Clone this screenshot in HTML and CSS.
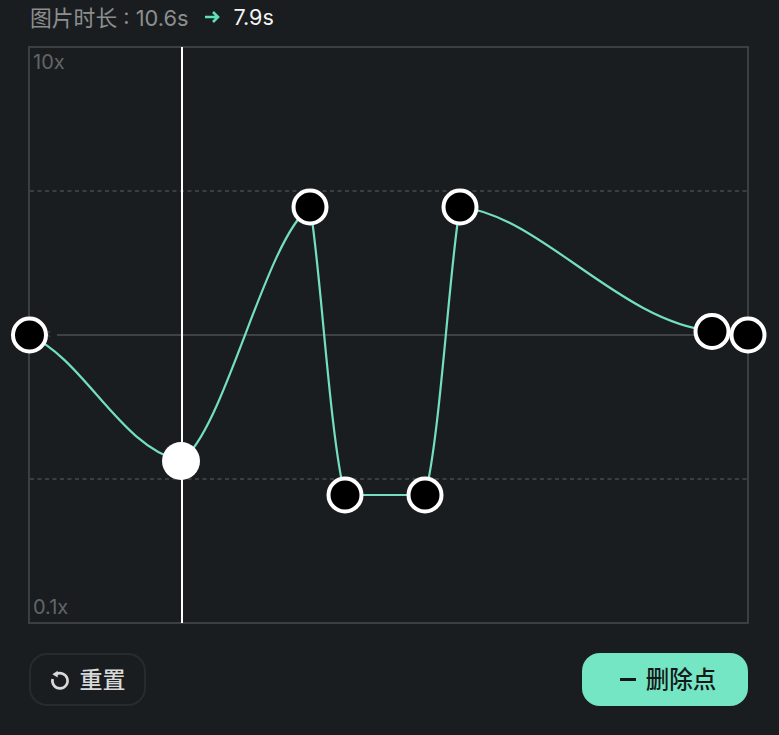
FILE: index.html
```html
<!DOCTYPE html>
<html lang="zh-CN">
<head>
    <meta charset="UTF-8">
    <meta name="viewport" content="width=device-width, initial-scale=1.0">
    <title>图片时长</title>
    <link rel="stylesheet" href="styles.css">
</head>
<body>
    <div class="panel">
        <div class="duration">
            <span class="duration-old">图片时长 : 10.6s</span>
            <svg class="arrow" width="16" height="14" viewBox="0 0 16 14">
                <path d="M1 7H14M9 2l5 5-5 5" fill="none" stroke="#5fe0b8" stroke-width="2.6"/>
            </svg>
            <span class="duration-new">7.9s</span>
        </div>

        <div class="chart">
            <span class="axis-label axis-top">10x</span>
            <span class="axis-label axis-bottom">0.1x</span>
            <svg class="curve" width="720" height="577" viewBox="29 47 720 577">
                <rect x="29" y="47" width="719" height="576" fill="none" stroke="#3b3f42" stroke-width="2"/>
                <path d="M30 191H748M30 479H748" stroke="#46494c" stroke-width="1.5" stroke-dasharray="4 3.500"/>
                <path d="M57 335H748" stroke="#3f4245" stroke-width="2"/>
                <path d="M50 331l-3 3 3 3" fill="none" stroke="#3f4245" stroke-width="1.500"/>
                <path d="M182 47V623" stroke="#fff" stroke-width="2"/>

                <g fill="none" stroke="#74dfbd" stroke-width="2.200">
                    <path d="M29 335C85 360 120 447 181 461"/>
                    <path d="M181 461C225 430 265 240 310 207"/>
                    <path d="M310 207C320 260 330 440 345 495"/>
                    <path d="M345 495H425"/>
                    <path d="M425 495C440 440 450 260 460 207"/>
                    <path d="M460 207C540 215 620 322 712 331"/>
                </g>

                <g fill="#000" stroke="#fff" stroke-width="4">
                    <circle cx="29.500" cy="335" r="16.500"/>
                    <circle cx="310" cy="207" r="16.500"/>
                    <circle cx="345" cy="495" r="16.500"/>
                    <circle cx="425" cy="495" r="16.500"/>
                    <circle cx="460" cy="207" r="16.500"/>
                    <circle cx="712" cy="331.500" r="16.500"/>
                    <circle cx="748" cy="335" r="16.500"/>
                </g>
                <circle cx="181" cy="461" r="19" fill="#fff"/>
            </svg>
        </div>

        <div class="actions">
            <button class="btn btn-reset">
                <svg width="20" height="20" viewBox="0 0 20 20">
                    <path d="M6 4.300A7.600 7.600 0 1 1 2.600 9" fill="none" stroke="#d9d9d9" stroke-width="2.600"/>
                    <path d="M7.700 0.800V7.500L2.300 4.200Z" fill="#d9d9d9"/>
                </svg>
                <span class="btn-text">重置</span>
            </button>
            <button class="btn btn-delete">
                <span class="minus"></span>
                <span class="btn-text">删除点</span>
            </button>
        </div>
    </div>
</body>
</html>
```

FILE: styles.css
```css
body {
    margin: 0;
    background-color: #1a1d1f;
    font-family: Inter, "Noto Sans CJK SC", sans-serif;
}

.panel {
    width: 779px;
    height: 735px;
    padding: 0 31px 0 29px;
    box-sizing: border-box;
    overflow: hidden;
}

.duration {
    display: flex;
    align-items: center;
    height: 33px;
    margin-left: 1px;
    font-size: 21.800px;
    color: #8c8e90;
}

.arrow {
    margin: 0 14px 0 15px;
}

.duration-new {
    color: #f4f4f4;
    font-size: 21.500px;
}

.chart {
    position: relative;
    width: 720px;
    height: 577px;
    margin-top: 14px;
}

.curve {
    display: block;
    overflow: visible;
}

.axis-label {
    position: absolute;
    left: 4px;
    font-size: 20px;
    color: #626568;
}

.axis-top {
    top: 3px;
}

.axis-bottom {
    bottom: 5px;
}

.actions {
    display: flex;
    justify-content: space-between;
    margin-top: 29px;
}

.btn {
    display: flex;
    align-items: center;
    justify-content: center;
    height: 53px;
    border-radius: 18px;
    box-sizing: border-box;
    font-family: inherit;
    font-size: 23px;
    font-weight: 500;
}

.btn-text {
    margin-bottom: 4px;
}

.btn-reset {
    width: 117px;
    gap: 10px;
    background: none;
    border: 2px solid #282b2e;
    color: #d9d9d9;
}

.btn-delete {
    width: 166px;
    gap: 10px;
    padding-left: 12px;
    background: #74e6c3;
    border: none;
    color: #14181a;
    font-size: 23.500px;
}

.minus {
    width: 16px;
    height: 3px;
    background: #14181a;
}
```
